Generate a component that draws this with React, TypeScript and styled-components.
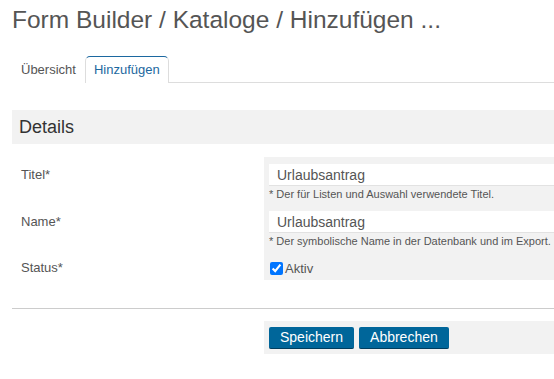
import React from "react"
import styled, { createGlobalStyle } from "styled-components"

const GlobalStyle = createGlobalStyle`
  html, body {
    margin: 0;
    padding: 0;
    background: #fff;
    font-family: "Liberation Sans", Arial, sans-serif;
  }
`

const Page = styled.div`
  padding: 5px 0 0 12px;
  width: 542px;
  overflow: hidden;
`

const Title = styled.h1`
  margin: 0;
  font-size: 24.5px;
  line-height: 30px;
  font-weight: normal;
  color: #555;
`

const TabBar = styled.div`
  display: flex;
  margin-top: 21px;
  border-bottom: 1px solid #ddd;
  height: 26px;
`

const Tab = styled.div<{ $active?: boolean }>`
  padding: 0 8px;
  height: 27px;
  box-sizing: border-box;
  font-size: 13px;
  line-height: 25px;
  color: ${({ $active }) => ($active ? "#1c68a0" : "#555")};
  border: 1px solid ${({ $active }) => ($active ? "#ddd" : "transparent")};
  border-top: 1px solid ${({ $active }) => ($active ? "#1c68a0" : "transparent")};
  border-bottom: none;
  border-radius: 5px 5px 0 0;
  background: #fff;
  margin-bottom: -1px;
`

const SectionHeader = styled.div`
  margin-top: 27px;
  height: 34px;
  background: #f2f2f2;
  padding-left: 7px;
  font-size: 18px;
  line-height: 34px;
  color: #333;
`

const Form = styled.div`
  display: grid;
  grid-template-columns: 252px 1fr;
  margin-top: 13px;
`

const Label = styled.div<{ $top?: number }>`
  padding: ${({ $top }) => $top ?? 7}px 0 0 9px;
  font-size: 13px;
  line-height: 22px;
  color: #555;
`

const Field = styled.div<{ $pad?: string }>`
  background: #f2f2f2;
  padding: ${({ $pad }) => $pad ?? "7px 0 4px 5px"};
  min-width: 0;
`

const Input = styled.input`
  display: block;
  width: calc(100% + 20px);
  box-sizing: border-box;
  height: 22px;
  border: none;
  border-bottom: 1px solid #e2e2e2;
  background: #fff;
  padding: 0 8px;
  font-family: inherit;
  font-size: 14px;
  color: #555;
  outline: none;
`

const Help = styled.div`
  margin-top: 2px;
  font-size: 11px;
  line-height: 12px;
  color: #555;
  white-space: nowrap;
`

const Check = styled.label`
  display: flex;
  align-items: center;
  gap: 2px;
  font-size: 13px;
  line-height: 15px;
  color: #555;

  input {
    margin: 0 0 0 1px;
    width: 13px;
    height: 13px;
  }
`

const Divider = styled.hr`
  margin: 28px 0 0;
  border: none;
  border-top: 1px solid #ccc;
`

const Actions = styled.div`
  display: grid;
  grid-template-columns: 252px 1fr;
  margin-top: 12px;
`

const ButtonRow = styled.div`
  grid-column: 2;
  display: flex;
  gap: 5px;
  background: #f2f2f2;
  padding: 6px 5px 5px;
`

const Button = styled.button`
  height: 22px;
  padding: 0 11px;
  border: none;
  border-bottom: 1px solid #003d5e;
  border-radius: 2px;
  background: #00669a;
  color: #fff;
  font-family: inherit;
  font-size: 14px;
  line-height: 21px;
`

export default function App() {
  return (
    <Page>
      <GlobalStyle />
      <Title>Form Builder / Kataloge / Hinzufügen ...</Title>
      <TabBar>
        <Tab>Übersicht</Tab>
        <Tab $active>Hinzufügen</Tab>
      </TabBar>
      <SectionHeader>Details</SectionHeader>
      <Form>
        <Label>Titel*</Label>
        <Field>
          <Input defaultValue="Urlaubsantrag" />
          <Help>* Der für Listen und Auswahl verwendete Titel.</Help>
        </Field>
        <Label>Name*</Label>
        <Field>
          <Input defaultValue="Urlaubsantrag" />
          <Help>* Der symbolische Name in der Datenbank und im Export.</Help>
        </Field>
        <Label $top={6}>Status*</Label>
        <Field $pad="10px 0 4px 5px">
          <Check>
            <input type="checkbox" defaultChecked />
            Aktiv
          </Check>
        </Field>
      </Form>
      <Divider />
      <Actions>
        <ButtonRow>
          <Button>Speichern</Button>
          <Button>Abbrechen</Button>
        </ButtonRow>
      </Actions>
    </Page>
  )
}
